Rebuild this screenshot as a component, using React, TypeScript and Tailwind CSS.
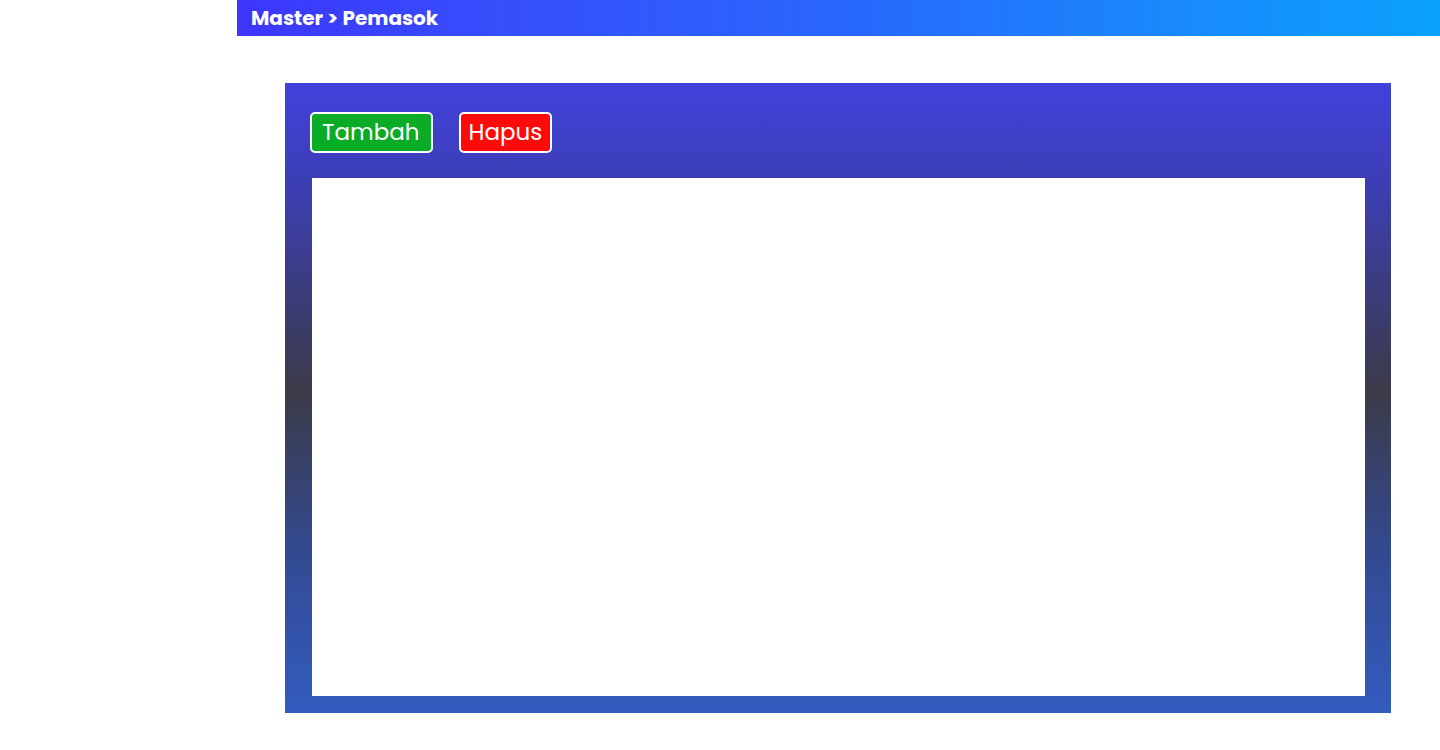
export default function App() {
  return (
    <div className="flex min-h-screen w-full bg-white font-['Poppins','Noto_Sans',sans-serif]">
      {/* sidebar space */}
      <div className="w-[237px] shrink-0" />

      <div className="flex flex-1 flex-col">
        <div className="flex h-9 items-center bg-gradient-to-r from-[#3d35fb] via-[#2866fc] to-[#0aa1fc] px-[14px]">
          <span className="text-[20px] font-bold leading-none text-white">Master &gt; Pemasok</span>
        </div>

        <div className="pl-12 pr-[49px] pt-[47px]">
          <div className="flex h-[630px] flex-col bg-[linear-gradient(to_bottom,#4141dc_0%,#3c3eb4_16%,#3b3a48_49%,#334a92_75%,#325cc0_100%)] pb-[17px] pl-[27px] pr-[26px] pt-[29px]">
            <div className="-ml-[2px] flex gap-[26px]">
              <button className="h-[41px] rounded-[5px] border-2 border-white bg-[#0aab26] pl-[10px] pr-[11px] text-[23px] leading-none text-white">
                Tambah
              </button>
              <button className="h-[41px] rounded-[5px] border-2 border-white bg-[#ff0a0a] px-[8px] text-[23px] leading-none text-white">
                Hapus
              </button>
            </div>
            <div className="mt-[25px] flex-1 bg-white" />
          </div>
        </div>
      </div>
    </div>
  );
}
